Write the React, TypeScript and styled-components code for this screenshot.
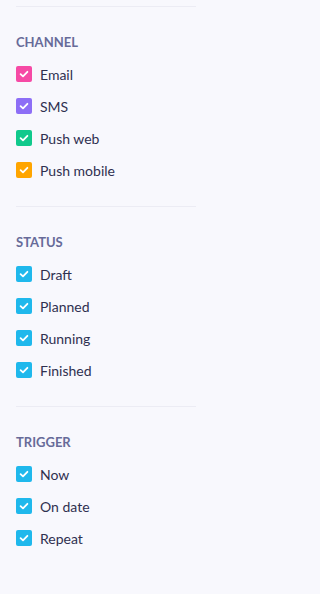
import React from "react";
import styled, { createGlobalStyle } from "styled-components";

const GlobalStyle = createGlobalStyle`
  html, body {
    margin: 0;
    padding: 0;
    background: #f8f8fd;
    font-family: Lato, "Open Sans", sans-serif;
  }
`;

const Panel = styled.div`
  width: 205px;
  padding: 6px 9px 0 16px;
  min-height: 594px;
  box-sizing: border-box;
  background: #f8f8fd;
`;

const Section = styled.section`
  border-top: 1px solid #ececf4;
  padding: 28px 0 20px;
`;

const Heading = styled.h4`
  margin: 0 0 9px;
  font-size: 13px;
  line-height: 14px;
  font-weight: 700;
  color: #676b99;
  text-transform: uppercase;
`;

const Row = styled.label`
  display: flex;
  align-items: center;
  gap: 8px;
  height: 32px;
  font-size: 14px;
  color: #2f3050;
  cursor: pointer;
`;

const Box = styled.span<{ $color: string }>`
  width: 16px;
  height: 16px;
  border-radius: 2px;
  background: ${(p) => p.$color};
  display: flex;
  align-items: center;
  justify-content: center;
  flex-shrink: 0;
`;

const Check = ({ color }: { color: string }) => (
  <Box $color={color}>
    <svg width="10" height="10" viewBox="0 0 10 10">
      <polyline
        points="1.6,5.2 4,7.4 8.4,2.8"
        fill="none"
        stroke="#fff"
        strokeWidth="1.8"
        strokeLinecap="round"
        strokeLinejoin="round"
      />
    </svg>
  </Box>
);

const BLUE = "#1fb8ec";

const sections = [
  {
    title: "Channel",
    items: [
      { label: "Email", color: "#f64aa5" },
      { label: "SMS", color: "#8d6ef6" },
      { label: "Push web", color: "#10c98c" },
      { label: "Push mobile", color: "#ffa500" },
    ],
  },
  {
    title: "Status",
    items: [
      { label: "Draft", color: BLUE },
      { label: "Planned", color: BLUE },
      { label: "Running", color: BLUE },
      { label: "Finished", color: BLUE },
    ],
  },
  {
    title: "Trigger",
    items: [
      { label: "Now", color: BLUE },
      { label: "On date", color: BLUE },
      { label: "Repeat", color: BLUE },
    ],
  },
];

export default function App() {
  return (
    <>
      <GlobalStyle />
      <Panel>
        {sections.map((s) => (
          <Section key={s.title}>
            <Heading>{s.title}</Heading>
            {s.items.map((it) => (
              <Row key={it.label}>
                <Check color={it.color} />
                {it.label}
              </Row>
            ))}
          </Section>
        ))}
      </Panel>
    </>
  );
}
